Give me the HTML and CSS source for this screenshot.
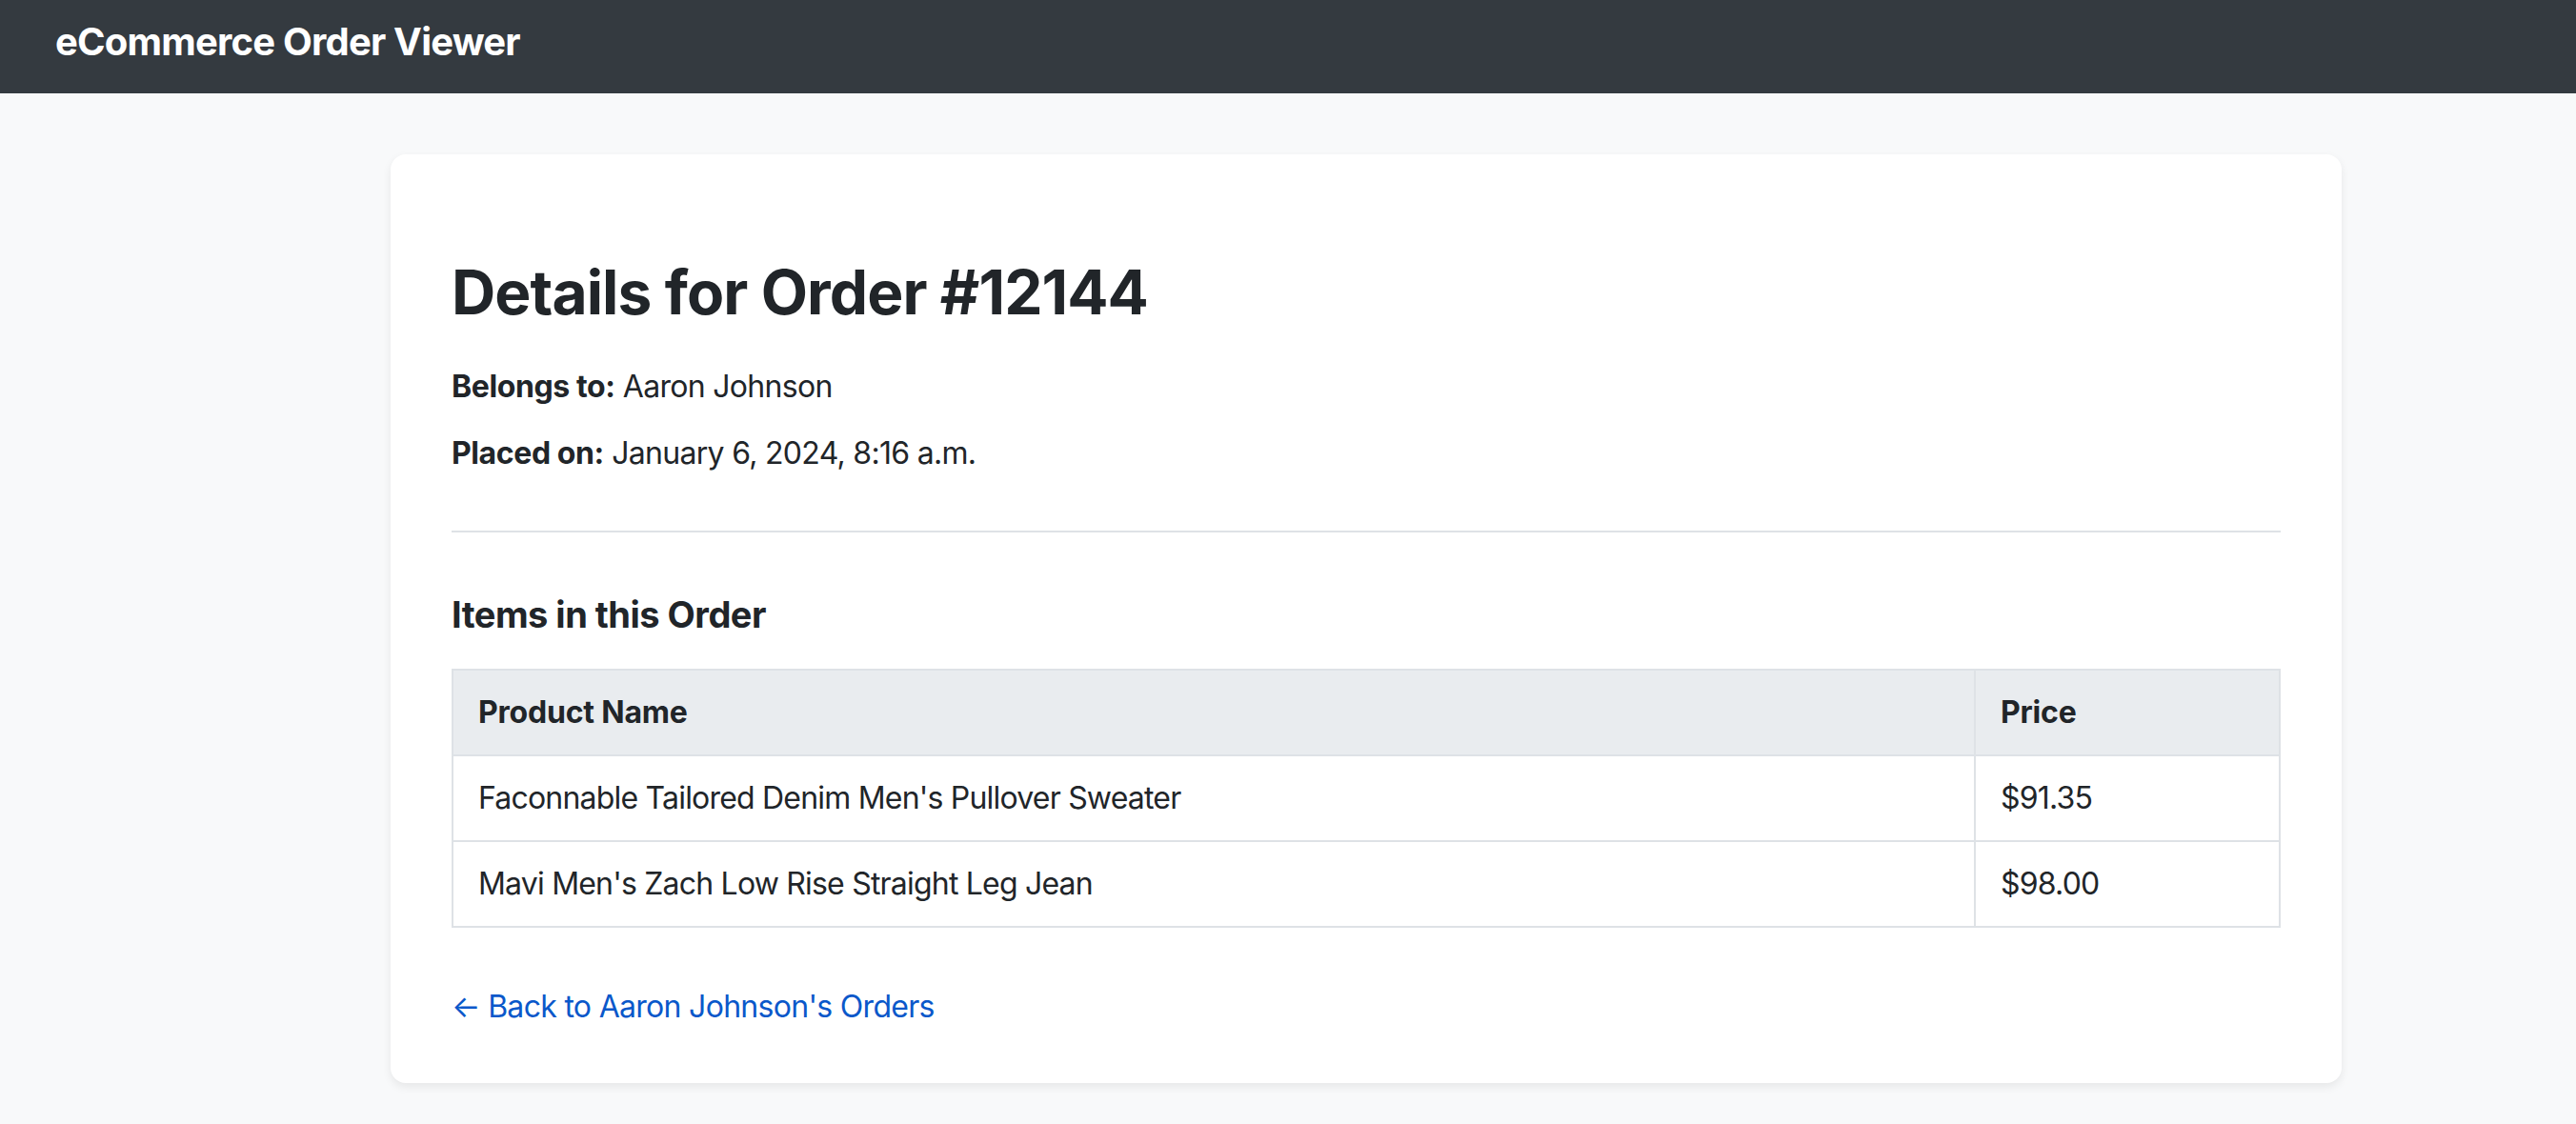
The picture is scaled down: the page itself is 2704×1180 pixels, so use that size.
FILE: index.html
```html
<!DOCTYPE html>
<html lang="en">
<head>
<meta charset="utf-8">
<title>Order #12144</title>
<link rel="stylesheet" href="styles.css">
</head>
<body>
<nav class="navbar">
  <span class="brand">eCommerce Order Viewer</span>
</nav>
<main class="page">
  <section class="card">
    <h1 class="title">Details for Order #12144</h1>
    <p class="meta meta-first"><strong>Belongs to:</strong> Aaron Johnson</p>
    <p class="meta"><strong>Placed on:</strong> January 6, 2024, 8:16 a.m.</p>
    <hr class="divider">
    <h2 class="subtitle">Items in this Order</h2>
    <table class="items">
      <thead>
        <tr><th>Product Name</th><th class="col-price">Price</th></tr>
      </thead>
      <tbody>
        <tr><td>Faconnable Tailored Denim Men's Pullover Sweater</td><td>$91.35</td></tr>
        <tr><td>Mavi Men's Zach Low Rise Straight Leg Jean</td><td>$98.00</td></tr>
      </tbody>
    </table>
    <a class="back" href="#">&larr; Back to Aaron Johnson's Orders</a>
  </section>
</main>
</body>
</html>
```
FILE: styles.css
```css
* { box-sizing: border-box; }
html, body { margin: 0; padding: 0; }
body {
  background: #f8f9fa;
  color: #212529;
  font-family: Inter, "Noto Sans", "Liberation Sans", sans-serif;
  font-size: 32px;
  line-height: 1.5;
  letter-spacing: -0.7px;
  min-height: 1180px;
}
.navbar {
  background: #343a40;
  height: 98px;
  padding: 14px 0 0 58px;
}
.brand {
  color: #ffffff;
  font-size: 40px;
  font-weight: 700;
  line-height: 60px;
  letter-spacing: -0.8px;
  display: block;
}
.page {
  padding: 64px 246px 0 410px;
}
.card {
  background: #ffffff;
  border-radius: 16px;
  box-shadow: 0 4px 10px rgba(0, 0, 0, 0.075);
  padding: 107px 64px 56px 64px;
}
.title {
  margin: 0 0 36px 0;
  font-size: 64px;
  line-height: 1.2;
  font-weight: 700;
  letter-spacing: -0.9px;
}
.meta {
  margin: 0 0 22px 0;
}
.meta strong { font-weight: 700; letter-spacing: -0.4px; }
.divider {
  border: 0;
  border-top: 2px solid #dee2e6;
  margin: 57px 0 63px 0;
}
.subtitle {
  margin: 0 0 33px 0;
  font-size: 38px;
  line-height: 1.25;
  font-weight: 700;
  letter-spacing: -0.5px;
}
.items {
  width: 100%;
  border-collapse: collapse;
  margin-bottom: 59px;
}
.items th, .items td {
  border: 2px solid #dee2e6;
  padding: 20px 26px;
  text-align: left;
  vertical-align: middle;
}
.items td { letter-spacing: -0.8px; }
.items th {
  background: #e9ecef;
  font-weight: 700;
  letter-spacing: -0.2px;
}
.col-price { width: 320px; }
.back {
  color: #0a58ca;
  text-decoration: none;
  display: block;
}
```
